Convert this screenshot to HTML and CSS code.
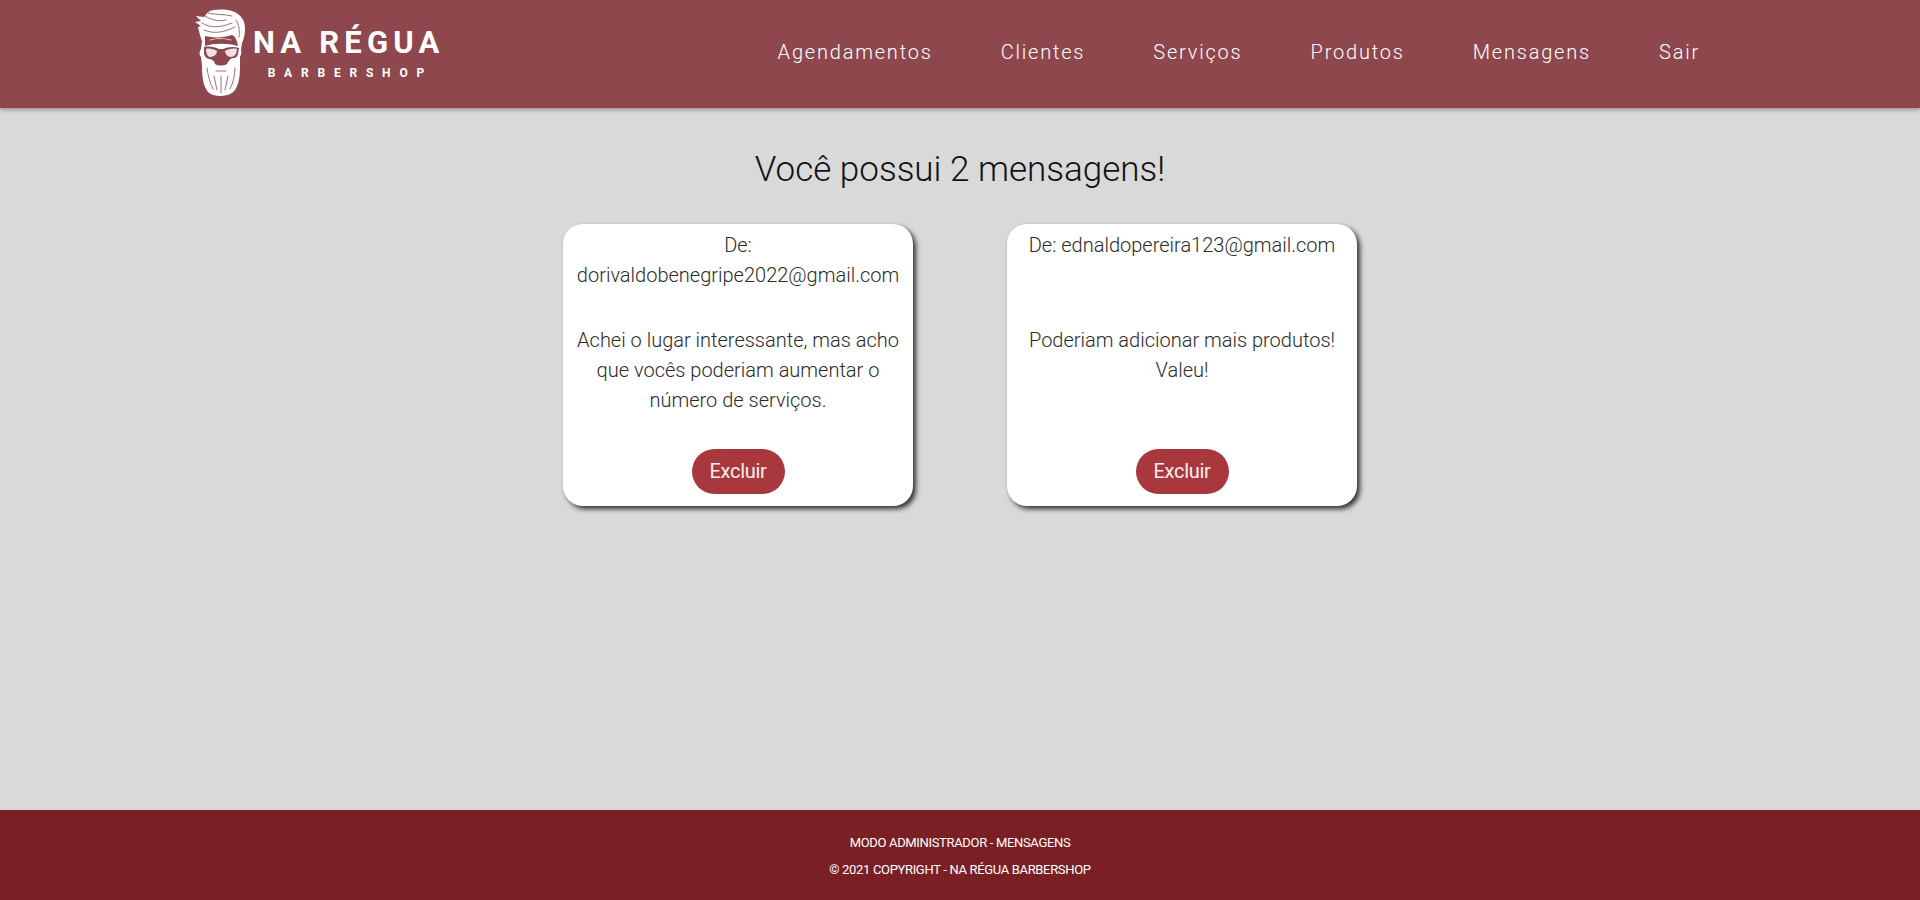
FILE: index.html
```html
<!DOCTYPE html>
<html lang="pt-BR">
<head>
<meta charset="utf-8">
<title>Na Régua Barbershop</title>
<link rel="stylesheet" href="styles.css">
</head>
<body>
<header class="topbar">
  <a class="logo" href="#">
    <svg class="logo-mark" viewBox="0 0 60 92" width="60" height="92" aria-hidden="true">
      <path class="m-w" d="M18 4C24 1 34 1 42 3C49 5 55 11 55 20C55 26 54 31 52 35L51 42C52 44 51 47 50 49L50 58C50 68 49 76 45 82C41 89 24 90 18 84C13 78 12 68 12 58L11 49C9 47 9 44 11 41L12 33C10 28 9 23 8 19L11 18L5 14L11 13L6 8L14 9Z"/>
      <path class="m-d" d="M15 28C23 30 33 30 42 27C45 28 47 32 48 38C38 35 24 35 15 38Z"/>
      <path class="m-d" d="M14 39C19 38 25 39 29 41L33 41C37 39 44 38 49 40L48 46C47 49 45 51 42 50C39 52 38 54 37 56C33 58 28 58 25 56C24 53 23 52 20 51C17 51 15 49 14 46Z"/>
      <path class="m-l" d="M16 41C19 40 24 41 27 43C27 46 24 49 20 49C18 49 16 46 16 41ZM35 43C38 41 43 40 47 41C47 46 44 49 41 49C38 49 35 46 35 43Z"/>
      <path class="m-p" d="M20 32C27 30 34 30 41 32"/>
      <path class="m-s" d="M15 8C22 12 28 14 36 12M12 15C20 20 30 20 42 15M18 5C26 7 34 6 42 8M14 22C23 26 33 25 45 19M46 12C49 17 50 22 49 29M26 63H36M17 60C18 68 20 75 23 81M31 68V85M45 60C45 68 43 75 40 81M24 68C25 73 26 77 27 82M38 68C37 73 36 77 35 82"/>
    </svg>
    <span class="logo-text">
      <span class="logo-name">NA RÉGUA</span>
      <span class="logo-sub">BARBERSHOP</span>
    </span>
  </a>
  <nav class="menu">
    <a href="#">Agendamentos</a>
    <a href="#">Clientes</a>
    <a href="#">Serviços</a>
    <a href="#">Produtos</a>
    <a href="#">Mensagens</a>
    <a href="#">Sair</a>
  </nav>
</header>
<main class="content">
  <h1 class="title">Você possui 2 mensagens!</h1>
  <section class="cards">
    <article class="card">
      <p class="from">De: dorivaldobenegripe2022@gmail.com</p>
      <p class="msg">Achei o lugar interessante, mas acho que vocês poderiam aumentar o número de serviços.</p>
      <button class="del" type="button">Excluir</button>
    </article>
    <article class="card">
      <p class="from">De: ednaldopereira123@gmail.com</p>
      <p class="msg">Poderiam adicionar mais produtos! Valeu!</p>
      <button class="del" type="button">Excluir</button>
    </article>
  </section>
</main>
<footer class="foot">
  <p>MODO ADMINISTRADOR - MENSAGENS</p>
  <p>© 2021 COPYRIGHT - NA RÉGUA BARBERSHOP</p>
</footer>
</body>
</html>
```
FILE: styles.css
```css
* { box-sizing: border-box; }
html, body { height: 100%; }
body {
  margin: 0;
  min-height: 900px;
  display: flex;
  flex-direction: column;
  background: #d9d9d9;
  font-family: Roboto, "Liberation Sans", sans-serif;
  overflow: hidden;
}
.topbar {
  height: 108px;
  flex: none;
  background: #8e474d;
  box-shadow: 0 2px 4px rgba(0,0,0,.3);
  display: flex;
  align-items: flex-start;
  justify-content: space-between;
  padding: 0 220px 0 190px;
  position: relative;
}
.logo {
  display: flex;
  align-items: flex-start;
  color: #fff;
  text-decoration: none;
  padding-top: 8px;
}
.logo-mark { display: block; }
.logo-text {
  display: flex;
  flex-direction: column;
  align-items: center;
  margin-left: 3px;
  padding-top: 19px;
}
.logo-name {
  font-size: 31px;
  line-height: 32px;
  font-weight: 700;
  letter-spacing: 5.2px;
  white-space: nowrap;
}
.logo-sub {
  font-size: 12px;
  line-height: 14px;
  font-weight: 700;
  letter-spacing: 8.8px;
  margin: 7px 0 0 3px;
  white-space: nowrap;
}
.menu {
  display: flex;
  gap: 68px;
  padding-top: 40px;
}
.menu a {
  color: #fff;
  text-decoration: none;
  font-size: 20px;
  line-height: 24px;
  font-weight: 300;
  letter-spacing: 1.8px;
  white-space: nowrap;
}
.content {
  flex: 1;
  display: flex;
  flex-direction: column;
  align-items: center;
}
.title {
  margin: 40px 0 0;
  font-size: 35px;
  line-height: 44px;
  font-weight: 300;
  color: #111;
}
.cards {
  display: flex;
  gap: 94px;
  margin-top: 32px;
}
.card {
  width: 350px;
  height: 282px;
  background: #fff;
  border-radius: 20px;
  box-shadow: 3px 3px 5px #333;
  padding: 6px 10px 0;
  display: flex;
  flex-direction: column;
  align-items: center;
  text-align: center;
  color: #2b2b2b;
  font-size: 20px;
  line-height: 30px;
  font-weight: 300;
}
.card p { margin: 0; }
.from { height: 60px; }
.card .msg { margin-top: 35px; height: 90px; }
.del {
  margin: 34px 0 0;
  width: 93px;
  height: 45px;
  border: 0;
  border-radius: 23px;
  background: #a8373e;
  color: #fbeeee;
  font: 400 20px/30px Roboto, "Liberation Sans", sans-serif;
  letter-spacing: -.3px;
  padding: 0 0 2px;
}
.foot {
  height: 90px;
  flex: none;
  background: #7a2025;
  color: #fff;
  text-align: center;
  font-size: 13px;
  line-height: 27px;
  letter-spacing: -.33px;
  padding-top: 19px;
}
.foot p { margin: 0; }
.m-w { fill: #fff; }
.m-d { fill: #8e474d; }
.m-l { fill: #f0e2e3; }
.m-p { fill: none; stroke: #e2c4c6; stroke-width: 1.2; stroke-linecap: round; }
.m-s { fill: none; stroke: #8e474d; stroke-width: .8; stroke-linecap: round; }
```
